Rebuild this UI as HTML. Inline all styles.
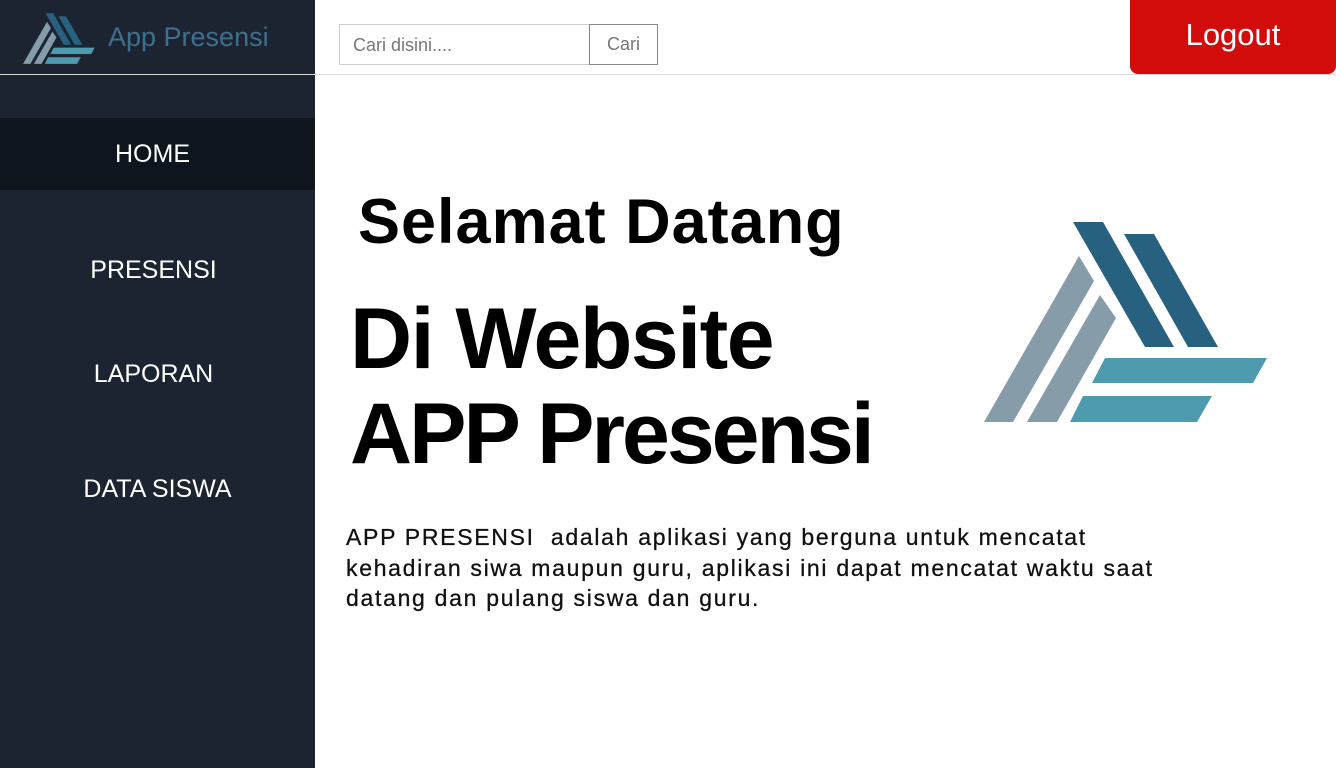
<!DOCTYPE html>
<html><head><meta charset="utf-8"><style>
*{margin:0;padding:0;box-sizing:border-box}
body{width:1336px;height:768px;position:relative;background:#fff;font-family:"Liberation Sans",sans-serif;overflow:hidden}
.side{position:absolute;left:0;top:0;width:315px;height:768px;background:#1b2430}
.hline{position:absolute;left:0;top:74px;width:1336px;height:1px;background:#d8d8d8}
.brand{position:absolute;left:108px;top:22px;color:#3f6f8e;font-size:27px}
.menu{position:absolute;left:0;width:315px;text-align:center;color:#fff;font-size:25px}
.active{position:absolute;left:0;top:118px;width:315px;height:72px;background:#0e151d}
.inp{position:absolute;left:339px;top:24px;width:251px;height:41px;border:1px solid #ccc;font-size:18px;color:#777;padding:10px 13px}
.btn{position:absolute;left:589px;top:24px;width:69px;height:41px;border:1px solid #888;font-size:18px;color:#777;text-align:center;line-height:39px}
.logout{position:absolute;left:1130px;top:0;width:206px;height:74px;background:#d20b0b;border-radius:0 0 8px 8px;color:#fff;font-size:31px;text-align:center;line-height:70px}
.t{position:absolute;font-weight:bold;color:#000;white-space:nowrap}
.p{position:absolute;left:346px;top:522px;font-size:23px;letter-spacing:1.7px;line-height:30.5px;color:#111;white-space:nowrap;-webkit-text-stroke:0.3px #111}
</style></head><body>
<div class="side"></div>
<div class="active"></div>
<div class="hline"></div>
<svg style="position:absolute;left:23px;top:13px" width="72" height="51" viewBox="984 222 284 200">
<g id="lg">
<polygon fill="#27617f" points="1073,222 1103,222 1174,347 1145,347"/>
<polygon fill="#27617f" points="1124,234 1154,234 1218,347 1188,347"/>
<polygon fill="#879ca9" points="1079,256 1094,281 1013,422 984,422"/>
<polygon fill="#879ca9" points="1100,295 1116,318 1057,422 1027,422"/>
<polygon fill="#4e9bb0" points="1105,358 1267,358 1253,383 1092,383"/>
<polygon fill="#4e9bb0" points="1083,396 1212,396 1197,422 1070,422"/>
</g></svg>
<div class="brand">App Presensi</div>
<div class="menu" style="top:140px;left:-5px">HOME</div>
<div class="menu" style="top:256px;left:-4px">PRESENSI</div>
<div class="menu" style="top:360px;left:-4px">LAPORAN</div>
<div class="menu" style="top:475px;left:0px">DATA SISWA</div>
<div class="inp">Cari disini....</div>
<div class="btn">Cari</div>
<div class="logout">Logout</div>
<div class="t" style="left:358px;top:186px;font-size:63px;letter-spacing:1px">Selamat Datang</div>
<div class="t" style="left:350px;top:290px;font-size:86px;letter-spacing:-1.5px">Di Website</div>
<div class="t" style="left:350px;top:385px;font-size:86px;letter-spacing:-3px">APP Presensi</div>
<svg style="position:absolute;left:984px;top:222px" width="284" height="200" viewBox="984 222 284 200"><use href="#lg"/></svg>
<div class="p">APP PRESENSI&nbsp; adalah aplikasi yang berguna untuk mencatat<br>kehadiran siwa maupun guru, aplikasi ini dapat mencatat waktu saat<br>datang dan pulang siswa dan guru.</div>
</body></html>
